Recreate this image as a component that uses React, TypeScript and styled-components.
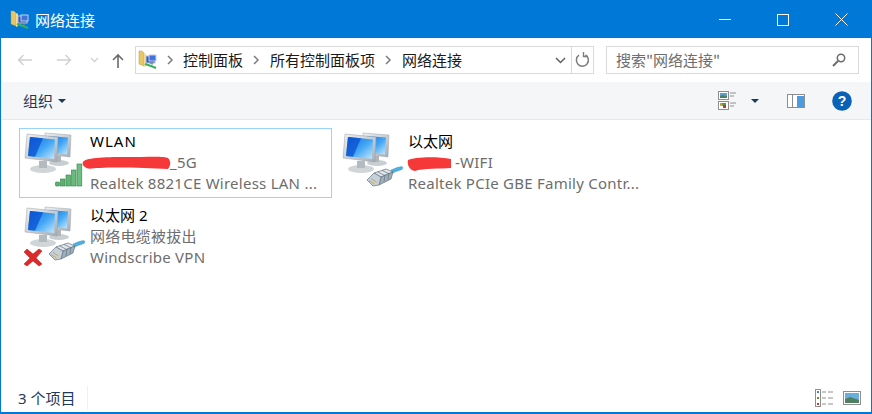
import React from "react";
import styled, { createGlobalStyle } from "styled-components";

const Global = createGlobalStyle`
  html, body { margin: 0; padding: 0; background: #fff; }
  body { font-family: "Noto Sans", "Noto Sans CJK SC", sans-serif; }
  * { box-sizing: border-box; }
`;
const Win = styled.div`
  width: 872px; height: 414px; display: flex; flex-direction: column;
  border: 1px solid #0078d7; border-bottom-width: 2px; background: #fff; overflow: hidden;
`;
const TitleBar = styled.div`
  height: 37px; flex: none; background: #0078d7; display: flex; align-items: center; padding-left: 9px; color: #fff;
`;
const Title = styled.span`
  margin-left: 5px; font: 15px/20px "Noto Sans CJK SC", sans-serif; flex: 1;
`;
const WinBtn = styled.div`
  width: 58.5px; height: 37px; display: flex; align-items: center; justify-content: center;
`;
const NavBar = styled.div`
  height: 44px; flex: none; display: flex; align-items: center; padding: 0 12px 0 9px;
`;
const NavBtn = styled.div<{ $w: number }>`
  width: ${p => p.$w}px; height: 28px; flex: none; display: flex; align-items: center; justify-content: center;
`;
const Address = styled.div`
  width: 459px; height: 28px; display: flex; align-items: center; border: 1px solid #d9d9d9; flex: none;
`;
const Crumbs = styled.div`
  flex: 1; display: flex; align-items: center; padding-left: 2px; min-width: 0;
`;
const Crumb = styled.span`
  font: 15px/18px "Noto Sans CJK SC", sans-serif; color: #1a1a1a; margin-top: -1px;
`;
const Chev = styled.span<{ $w: number }>`
  width: ${p => p.$w}px; display: flex; justify-content: center; flex: none;
`;
const AddrEnd = styled.div<{ $border?: boolean }>`
  width: 22px; height: 26px; display: flex; align-items: center; justify-content: center;
  flex: none; border-left: ${p => (p.$border ? "1px solid #d9d9d9" : "none")};
`;
const Search = styled.div`
  width: 253px; height: 28px; margin-left: 12px; border: 1px solid #d9d9d9; display: flex; align-items: center;
  justify-content: space-between; padding: 0 12px 0 9px; font: 15px/20px "Noto Sans CJK SC", sans-serif; color: #6d6d6d;
`;
const ToolBar = styled.div`
  height: 38px; flex: none; background: #f5f6f7; border-bottom: 1px solid #e8e9ea; display: flex; align-items: center; padding: 0 19px 0 22px;
  font: 15px/20px "Noto Sans CJK SC", sans-serif; color: #1e395b;
`;
const Organize = styled.span`
  flex: 1; display: flex; align-items: center; gap: 5px;
`;
const ToolIcon = styled.span<{ $mr: number }>`
  display: flex; margin-right: ${p => p.$mr}px;
`;
const Content = styled.div`
  flex: 1; display: grid; grid-template-columns: 313px 313px; grid-auto-rows: 70px; column-gap: 5px; row-gap: 4px;
  padding: 8px 0 0 18px; align-content: start;
`;
const Item = styled.div<{ $selected?: boolean }>`
  position: relative; display: flex; padding-left: 1px; border: 1px solid ${p => (p.$selected ? "#99d1ff" : "transparent")};
`;
const Texts = styled.div`
  margin-left: 3px; padding-top: 2px; width: 232px; min-width: 0;
  font: 15px/21px "Noto Sans", "Noto Sans CJK SC", sans-serif; color: #6d6d6d;
`;
const Name = styled.div<{ $spacing: number }>`
  color: #000; white-space: nowrap; letter-spacing: ${p => p.$spacing}px;
`;
const Line = styled.div`
  white-space: nowrap; letter-spacing: 0.25px;
`;
const Hidden = styled.span<{ $w: number }>`
  display: inline-block; width: ${p => p.$w}px;
`;
const Scribble = styled.svg`
  position: absolute; pointer-events: none;
`;
const Status = styled.div`
  height: 31px; flex: none; display: flex; align-items: center; padding: 2px 10px 0 17px; font: 15px/20px "Noto Sans", "Noto Sans CJK SC", sans-serif; color: #1e395b;
`;
const StatusText = styled.span`
  width: 70px; height: 24px; line-height: 24px; border-right: 1px solid #f0f0f0; flex: none;
`;
const Spacer = styled.span`
  flex: 1;
`;

const FolderIcon = () => (
  <svg width="20" height="20" viewBox="0 0 20 20">
    <path d="M1 1h3l2 2v13l-5-2z" fill="#e8c766" stroke="#b69a4a" strokeWidth=".5" />
    <path d="M6 3l2 1v12l-2 1z" fill="#f3dd94" />
    <rect x="8" y="6" width="9" height="7" fill="#2a56c8" stroke="#b8c4d8" />
    <rect x="11" y="5" width="7" height="6" fill="#3f73dd" stroke="#c7d2e0" />
    <path d="M7 14l6 2 5 2" stroke="#38b060" strokeWidth="2" fill="none" />
    <path d="M12 13l3 1" stroke="#8a8f99" strokeWidth="1.5" />
  </svg>
);

const Monitors = () => (
  <>
    <defs>
      <linearGradient id="scr" x1="0" y1="0" x2="1" y2="1">
        <stop offset="0" stopColor="#0a6be0" />
        <stop offset=".55" stopColor="#45a8f5" />
        <stop offset="1" stopColor="#c8e9fc" />
      </linearGradient>
      <linearGradient id="frm" x1="0" y1="0" x2="1" y2="1">
        <stop offset="0" stopColor="#eef1f3" />
        <stop offset="1" stopColor="#a5adb3" />
      </linearGradient>
    </defs>
    <ellipse cx="38" cy="34" rx="10" ry="3" fill="#c8ced2" />
    <path d="M34 27h6v6h-6z" fill="#b0b7bc" />
    <path d="M24 4l26 2-1 22-25-3z" fill="url(#frm)" stroke="#9aa3aa" strokeWidth=".5" />
    <path d="M27 7l20 1.5-1 17-19-2z" fill="url(#scr)" />
    <ellipse cx="22" cy="40" rx="13" ry="4" fill="#d0d5d8" />
    <path d="M18 32h8v7h-8z" fill="#b4bbc0" />
    <path d="M6 5l31 3-1 25-32-4z" fill="url(#frm)" stroke="#98a1a8" strokeWidth=".5" />
    <path d="M9 8l25 2.5-1 19.5-26-3z" fill="url(#scr)" />
    <path d="M9 8l13 1.3-8 18.4-7-.8z" fill="#0a4fd0" opacity=".75" />
  </>
);

const Signal = () => (
  <g stroke="#2f7f45" strokeWidth=".6">
    <rect x="34.5" y="53" width="4" height="4" rx=".8" fill="#5fb06f" />
    <rect x="39.5" y="50" width="4.5" height="7" fill="#5fb06f" />
    <rect x="45" y="46" width="4.5" height="11" fill="#62b575" />
    <rect x="50.5" y="41" width="4.5" height="16" fill="#68bb7c" />
    <rect x="56" y="35" width="4.8" height="22" fill="#6fbf83" />
  </g>
);

const Plug = () => (
  <g>
    <path d="M52 41l6-2.5 4.5-1 1.5 1-1 2-6 2-4 2z" fill="#4fb0e0" stroke="#2f8cc0" strokeWidth=".4" />
    <path d="M35 44l12-4 7 3-12 5z" fill="#dfe6ec" stroke="#66747f" strokeWidth=".7" />
    <path d="M42 48l12-5-2 7-12 6z" fill="#9fb0bd" stroke="#66747f" strokeWidth=".7" />
    <path d="M28 51l7-7 7 4-2 8-6 1z" fill="#c6d0d8" stroke="#66747f" strokeWidth=".7" />
    <path d="M38.5 42.8l7 3.6M43 41.4l7 3.4M46 45.5l-1 7.5M50 43.8l-1 7.5" stroke="#66747f" strokeWidth=".7" />
    <path d="M30 51.5l5.5 3.5M32 49.5l5.5 3.5" stroke="#c9a94e" strokeWidth="1" />
  </g>
);

const NetIcon = ({ kind }: { kind: "wifi" | "eth" | "off" }) => (
  <svg width="66" height="66" viewBox="0 0 66 66" style={{ flex: "none" }}>
    <Monitors />
    {kind === "wifi" && <Signal />}
    {kind !== "wifi" && <Plug />}
    {kind === "off" && (
      <path d="M3 49l3-3 6 5 6-5 3 2-6 7 6 6-3 2-6-5-6 5-3-2 6-6z" fill="#dc2a2a" stroke="#a81616" strokeWidth=".5" />
    )}
  </svg>
);

const Arrow = ({ color, flip }: { color: string; flip?: boolean }) => (
  <svg width="16" height="12" viewBox="0 0 16 12" style={flip ? { transform: "scaleX(-1)" } : undefined}>
    <path d="M15 6H1.5M6.5 1l-5 5 5 5" fill="none" stroke={color} strokeWidth="1.4" />
  </svg>
);

const ViewIcon = () => (
  <svg width="19" height="19" viewBox="0 0 19 19">
    <rect x=".5" y=".5" width="10" height="8" fill="#fff" stroke="#8e8e8e" />
    <rect x="2" y="2" width="7" height="5" fill="#5d9fd0" />
    <path d="M2 5l3-1 4 1.5V7H2z" fill="#4f7f5f" />
    <rect x=".5" y="10.5" width="10" height="8" fill="#fff" stroke="#8e8e8e" />
    <rect x="2" y="12" width="3" height="3" fill="#d0a030" />
    <rect x="5" y="14" width="3" height="3" fill="#c03a2a" />
    <rect x="4" y="12" width="4" height="2" fill="#5a9a4a" />
    <path d="M12 2h6M12 5h4M12 12h6M12 15h4" stroke="#8e8e8e" />
  </svg>
);

const ChevIcon = () => (
  <svg width="7" height="10"><path d="M1 1l4 4-4 4" fill="none" stroke="#7d7d7d" strokeWidth="1.5" /></svg>
);

export default function App() {
  return (
    <>
      <Global />
      <Win>
        <TitleBar>
          <FolderIcon />
          <Title>网络连接</Title>
          <WinBtn>
            <svg width="12" height="2"><path d="M0 .5h12" stroke="#fff" /></svg>
          </WinBtn>
          <WinBtn>
            <svg width="12" height="12"><rect x=".5" y=".5" width="11" height="11" fill="none" stroke="#fff" /></svg>
          </WinBtn>
          <WinBtn>
            <svg width="13" height="13"><path d="M.5.5l12 12M12.5.5l-12 12" stroke="#fff" /></svg>
          </WinBtn>
        </TitleBar>
        <NavBar>
          <NavBtn $w={30}><Arrow color="#d0d0d0" /></NavBtn>
          <NavBtn $w={47}><Arrow color="#d0d0d0" flip /></NavBtn>
          <NavBtn $w={14}>
            <svg width="9" height="6"><path d="M1 1l3.5 3.5L8 1" fill="none" stroke="#d0d0d0" strokeWidth="1.3" /></svg>
          </NavBtn>
          <NavBtn $w={34}>
            <svg width="12" height="15" viewBox="0 0 12 15"><path d="M6 15V2M1 7l5-5 5 5" fill="none" stroke="#6b6b6b" strokeWidth="1.6" /></svg>
          </NavBtn>
          <Address>
            <Crumbs>
              <FolderIcon />
              <Chev $w={25}><ChevIcon /></Chev>
              <Crumb>控制面板</Crumb>
              <Chev $w={27}><ChevIcon /></Chev>
              <Crumb>所有控制面板项</Crumb>
              <Chev $w={27}><ChevIcon /></Chev>
              <Crumb>网络连接</Crumb>
            </Crumbs>
            <AddrEnd>
              <svg width="11" height="7"><path d="M1 1l4.5 4.5L10 1" fill="none" stroke="#606060" strokeWidth="1.5" /></svg>
            </AddrEnd>
            <AddrEnd $border>
              <svg width="15" height="16" viewBox="0 0 15 16"><path d="M10.5 3A6 6 0 1 1 4 3.2" fill="none" stroke="#7d7d7d" strokeWidth="1.5" /><path d="M8.5 0v4.5H13" fill="none" stroke="#7d7d7d" strokeWidth="1.4" /></svg>
            </AddrEnd>
          </Address>
          <Search>
            <span>搜索"网络连接"</span>
            <svg width="14" height="14" viewBox="0 0 14 14"><circle cx="9" cy="5" r="3.7" fill="none" stroke="#6b6b6b" strokeWidth="1.5" /><path d="M6 8l-5 5" stroke="#6b6b6b" strokeWidth="2" /></svg>
          </Search>
        </NavBar>
        <ToolBar>
          <Organize>
            组织
            <svg width="8" height="4"><path d="M0 0h8L4 4z" fill="#1e395b" /></svg>
          </Organize>
          <ToolIcon $mr={14}><ViewIcon /></ToolIcon>
          <ToolIcon $mr={28}><svg width="8" height="4"><path d="M0 0h8L4 4z" fill="#1e395b" /></svg></ToolIcon>
          <ToolIcon $mr={27}>
            <svg width="18" height="14" viewBox="0 0 18 14"><rect x=".5" y=".5" width="17" height="13" fill="#fff" stroke="#8e8e8e" /><rect x="5" y="1" width="1" height="12" fill="#8e8e8e" /><rect x="10" y="2" width="7" height="11" fill="#4a9be0" /></svg>
          </ToolIcon>
          <ToolIcon $mr={0}>
            <svg width="20" height="20" viewBox="0 0 20 20"><circle cx="10" cy="10" r="9.8" fill="#0a62b8" /><text x="10" y="15" textAnchor="middle" fill="#fff" fontFamily="Liberation Sans" fontWeight="700" fontSize="14">?</text></svg>
          </ToolIcon>
        </ToolBar>
        <Content>
          <Item $selected>
            <NetIcon kind="wifi" />
            <Texts>
              <Name $spacing={1}>WLAN</Name>
              <Line><Hidden $w={80} />_5G</Line>
              <Line>Realtek 8821CE Wireless LAN ...</Line>
            </Texts>
            <Scribble width="90" height="14" viewBox="0 0 90 14" style={{ left: 62, top: 27 }}>
              <path d="M1 6C3 2 20 1 45 1c20 0 38-1 41 1 3 3 3 7 0 11-20-1-50-2-68-1C10 12 6 14 3 11 1 10 0 8 1 6z" fill="#f73838" />
            </Scribble>
          </Item>
          <Item>
            <NetIcon kind="eth" />
            <Texts>
              <Name $spacing={0}>以太网</Name>
              <Line><Hidden $w={47} />-WIFI</Line>
              <Line>Realtek PCIe GBE Family Contr...</Line>
            </Texts>
            <Scribble width="46" height="16" viewBox="0 0 46 16" style={{ left: 69, top: 27 }}>
              <path d="M1 4C6 1 30 0 44 3v9C34 13 15 12 8 15 2 14 0 8 1 4z" fill="#f73838" />
            </Scribble>
          </Item>
          <Item>
            <NetIcon kind="off" />
            <Texts>
              <Name $spacing={0}>以太网 2</Name>
              <Line>网络电缆被拔出</Line>
              <Line>Windscribe VPN</Line>
            </Texts>
          </Item>
        </Content>
        <Status>
          <StatusText>3 个项目</StatusText>
          <Spacer />
          <svg width="18" height="18" viewBox="0 0 18 18" style={{ marginRight: 10 }}>
            <rect x=".5" y=".5" width="5" height="17" fill="#fff" stroke="#8e8e8e" />
            <rect x="2" y="2" width="2" height="2" fill="#3d8ad0" /><rect x="2" y="8" width="2" height="2" fill="#6a8a30" /><rect x="2" y="14" width="2" height="2" fill="#c03a2a" />
            <path d="M7 3h4M13 3h5M7 9h4M13 9h5M7 15h4M13 15h5" stroke="#8e8e8e" />
          </svg>
          <svg width="18" height="14" viewBox="0 0 18 14">
            <rect x=".5" y=".5" width="17" height="13" fill="#fff" stroke="#8e8e8e" />
            <rect x="2" y="2" width="14" height="10" fill="#6aaee0" />
            <path d="M2 8l5-2 9 3v3H2z" fill="#4f7f5f" />
          </svg>
        </Status>
      </Win>
    </>
  );
}
